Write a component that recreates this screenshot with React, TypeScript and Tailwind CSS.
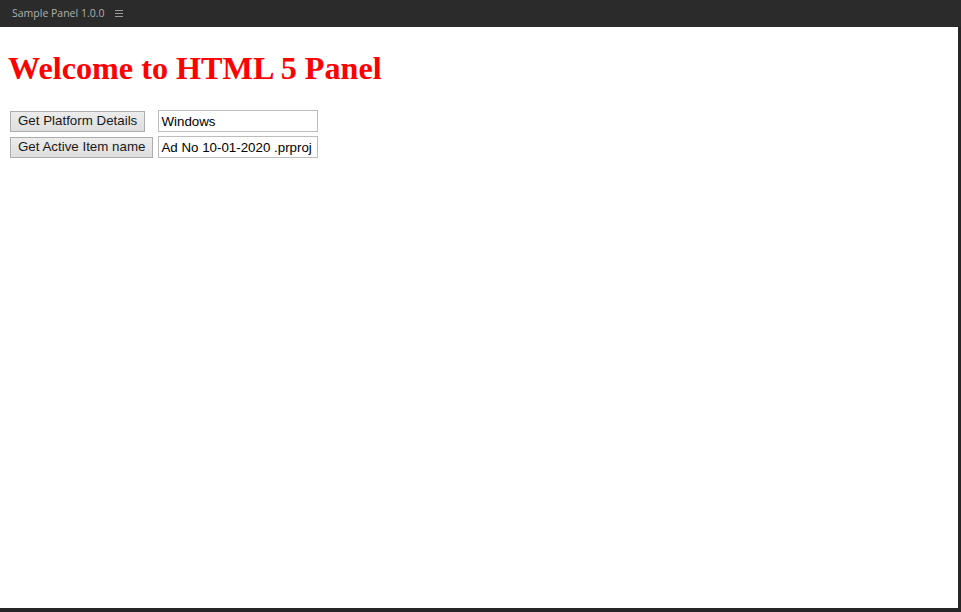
import React from 'react';

const rows = [
  { label: 'Get Platform Details', value: 'Windows' },
  { label: 'Get Active Item name', value: 'Ad No 10-01-2020 .prproj' },
];

const App = () => {
  return (
    <div className="w-[961px] h-[612px] bg-[#262626] flex flex-col overflow-hidden">
      {/* Panel tab bar */}
      <div className="h-[27px] shrink-0 bg-[#2b2b2b] flex items-center pl-[12px] gap-[11px] font-['Open_Sans','DejaVu_Sans',sans-serif] text-[10.5px] text-[#b0b0b0]">
        <span>Sample Panel 1.0.0</span>
        <span className="flex flex-col gap-[2px] w-[8px]">
          <span className="h-[1px] bg-[#9a9a9a]" />
          <span className="h-[1px] bg-[#9a9a9a]" />
          <span className="h-[1px] bg-[#9a9a9a]" />
        </span>
      </div>

      {/* Panel body */}
      <div className="flex-1 bg-white mr-[3px] mb-[4px] px-[8px] pt-[23px]">
        <h1 className="font-['Liberation_Serif',serif] font-bold text-[32.2px] leading-[37px] text-[#ff0000]">
          Welcome to HTML 5 Panel
        </h1>
        <div className="mt-[22px] ml-[2px] grid grid-cols-[auto_auto] justify-start gap-x-[5px] gap-y-[2px] font-['Liberation_Sans',Arial,sans-serif] text-[13.33px] text-black">
          {rows.map((r) => (
            <React.Fragment key={r.label}>
              <div className="h-[24px] flex items-center">
                <button className="h-[21px] px-[7px] bg-gradient-to-b from-[#ececec] to-[#dedede] border border-[#adadad] text-[#1a1a1a] leading-none">
                  {r.label}
                </button>
              </div>
              <div className="h-[24px] flex items-center">
                <input
                  readOnly
                  value={r.value}
                  className="w-[160px] h-[22px] px-[2px] border border-[#bdbdbd] bg-white outline-none"
                />
              </div>
            </React.Fragment>
          ))}
        </div>
      </div>
    </div>
  );
};

export default App;
